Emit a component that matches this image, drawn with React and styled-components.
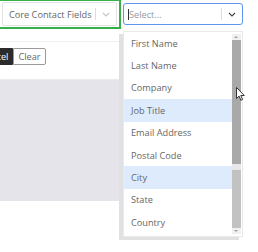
import React from "react";
import styled, { createGlobalStyle } from "styled-components";

const GlobalStyle = createGlobalStyle`
  html, body {
    margin: 0;
    padding: 0;
    background: #fff;
  }

  body {
    font-family: "Open Sans", "Liberation Sans", sans-serif;
    color: #555;
  }
`;

const fields = [
  "First Name",
  "Last Name",
  "Company",
  "Job Title",
  "Email Address",
  "Postal Code",
  "City",
  "State",
  "Country",
];

const Chevron = () => (
  <svg width="8" height="5" viewBox="0 0 8 5">
    <path d="M1 1l3 3 3-3" fill="none" stroke="currentColor" strokeWidth="1.1" />
  </svg>
);

const App = () => {
  return (
    <>
      <GlobalStyle />
      <StPage>
        <StToolbar>
          <StHighlight>
            <StSelect>
              <StValue>Core Contact Fields</StValue>
              <StIndicators>
                <StSeparator />
                <StArrow $muted>
                  <Chevron />
                </StArrow>
              </StIndicators>
            </StSelect>
          </StHighlight>

          <StSearchWrap>
            <StSearch>
              <StPlaceholder>
                <StCaret />
                Select...
              </StPlaceholder>
              <StIndicators>
                <StSeparator />
                <StArrow>
                  <Chevron />
                </StArrow>
              </StIndicators>
            </StSearch>

            <StMenu>
              <StList>
                {fields.map((field) => (
                  <StOption key={field} $active={field === "Job Title" || field === "City"}>
                    {field}
                  </StOption>
                ))}
              </StList>
              <StScrollBar>
                <StScrollButton $up />
                <StScrollTrack>
                  <StThumb />
                </StScrollTrack>
                <StScrollButton />
              </StScrollBar>
            </StMenu>

            <StCursor width="9" height="14" viewBox="0 0 9 14">
              <path d="M0.5 0.5v11l2.6-2.4 1.8 4.2 1.7-0.8-1.8-4h3.5z" fill="#fff" stroke="#222" strokeWidth="0.9" />
            </StCursor>
          </StSearchWrap>
        </StToolbar>

        <StContent>
          <StActions>
            <StDarkButton>Cancel</StDarkButton>
            <StButton>Clear</StButton>
          </StActions>
          <StPanel />
        </StContent>
      </StPage>
    </>
  );
};

export default App;

const StPage = styled.div`
  position: relative;
  width: 258px;
  height: 252px;
  overflow: hidden;
  background: #fff;
`;

const StToolbar = styled.div`
  display: flex;
  align-items: flex-start;
  gap: 2px;
`;

const StHighlight = styled.div`
  margin-left: -3px;
  padding: 1px 2px 1px 3px;
  border: 2px solid #35b04a;
  border-top-width: 1px;
`;

const StSelect = styled.div`
  display: flex;
  align-items: center;

  width: 115px;
  height: 24px;
  box-sizing: border-box;
  padding-left: 6px;

  border: 1px solid #e3e3e3;
  border-radius: 2px;
  font-size: 9.2px;
  color: #666;
`;

const StValue = styled.span`
  flex: 1;
  white-space: nowrap;
`;

const StIndicators = styled.div`
  display: flex;
  align-items: center;
  height: 100%;
`;

const StSeparator = styled.span`
  width: 1px;
  height: 12px;
  background: #ddd;
`;

const StArrow = styled.span`
  display: flex;
  align-items: center;
  justify-content: center;
  width: 20px;
  color: ${({ $muted }) => ($muted ? "#c4c4c4" : "#444")};
`;

const StSearchWrap = styled.div`
  position: relative;
  margin-top: 3px;
`;

const StSearch = styled.div`
  display: flex;
  align-items: center;

  width: 120px;
  height: 22px;
  box-sizing: border-box;
  padding-left: 4px;

  border: 1px solid #5b97ee;
  border-radius: 3px;
  font-size: 9.2px;
`;

const StPlaceholder = styled.span`
  display: flex;
  align-items: center;
  flex: 1;
  color: #999;
`;

const StCaret = styled.span`
  width: 1px;
  height: 11px;
  background: #333;
`;

const StMenu = styled.div`
  position: absolute;
  top: 28px;
  left: 0;
  z-index: 2;

  display: flex;
  width: 120px;
  height: 206px;
  box-sizing: border-box;

  background: #fff;
  border: 1px solid #e9e9e9;
  box-shadow: -4px 3px 0 0 #e1e1e3;
`;

const StList = styled.ul`
  flex: 1;
  margin: 0;
  padding: 0;
  list-style: none;
`;

const StOption = styled.li`
  display: flex;
  align-items: center;
  height: 22.4px;
  padding-left: 7px;

  background: ${({ $active }) => ($active ? "#deebfd" : "transparent")};
  font-size: 9.2px;
  color: #666;
  white-space: nowrap;
`;

const StScrollBar = styled.div`
  display: flex;
  flex-direction: column;
  width: 9px;
  margin: 2px 1px 2px 0;
  background: #f0f0f0;
`;

const StScrollButton = styled.span`
  position: relative;
  height: 6px;
  background: #f0f0f0;

  &::after {
    content: "";
    position: absolute;
    left: 2px;
    top: 2px;
    border-left: 2.5px solid transparent;
    border-right: 2.5px solid transparent;
    ${({ $up }) => ($up ? "border-bottom: 2px solid #a0a0a0;" : "border-top: 2px solid #a0a0a0;")}
  }
`;

const StScrollTrack = styled.div`
  flex: 1;
  display: flex;
  flex-direction: column;
  background: #a9a9a9;
`;

const StThumb = styled.div`
  margin-top: auto;
  height: 58px;
  border-top: 6px solid #e8e8e8;
  background: #c2c2c2;
`;

const StCursor = styled.svg`
  position: absolute;
  top: 84px;
  left: 113px;
  z-index: 3;
`;

const StContent = styled.div`
  display: flex;
  flex-direction: column;
  width: 123px;
  margin-top: 12px;
  border-top: 1px solid #f1f1f1;
`;

const StActions = styled.div`
  display: flex;
  padding: 6px 0 14px;
  border-bottom: 1px solid #ececec;
`;

const StDarkButton = styled.button`
  height: 17px;
  margin-left: -25px;
  padding: 0 4px;

  background: #2b2b2b;
  border: 1px solid #2b2b2b;
  border-radius: 2px 0 0 2px;

  font-family: inherit;
  font-size: 9.2px;
  color: #fff;
`;

const StButton = styled.button`
  height: 17px;
  padding: 0 4px;

  background: #fff;
  border: 1px solid #9a9a9a;
  border-radius: 0 2px 2px 0;

  font-family: inherit;
  font-size: 9.2px;
  color: #666;
`;

const StPanel = styled.div`
  height: 121px;
  background: #e5e4ea;
`;
